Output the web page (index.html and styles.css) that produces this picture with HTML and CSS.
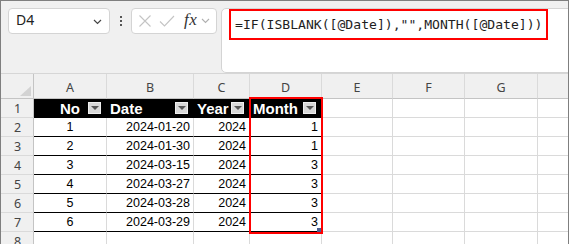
FILE: index.html
```html
<!DOCTYPE html>
<html>
<head>
<meta charset="utf-8">
<link rel="stylesheet" href="styles.css">
</head>
<body>
<div class="frame">
  <div class="fbar">
    <div class="namebox">
      <span class="nb-text">D4</span>
      <svg class="chev" width="9" height="6" viewBox="0 0 9 6"><path d="M1 1 L4.5 4.5 L8 1" fill="none" stroke="#444" stroke-width="1.2"/></svg>
    </div>
    <div class="dots"><i></i><i></i><i></i></div>
    <div class="fxbox">
      <svg class="ico" width="14" height="14" viewBox="0 0 14 14"><path d="M1.5 1.5 L12.5 12.5 M12.5 1.5 L1.5 12.5" stroke="#c4c4c4" stroke-width="1.1" fill="none"/></svg>
      <svg class="ico" width="16" height="12" viewBox="0 0 16 12"><path d="M1 6.5 L5.5 11 L15 1" stroke="#c4c4c4" stroke-width="1.1" fill="none"/></svg>
      <span class="fx">fx</span>
      <svg class="chev2" width="9" height="6" viewBox="0 0 9 6"><path d="M1 1 L4.5 4.5 L8 1" fill="none" stroke="#b0b0b0" stroke-width="1.1"/></svg>
    </div>
    <div class="finput">
      <span class="formula">=IF(ISBLANK([@Date]),"",MONTH([@Date]))</span>
    </div>
  </div>
  <div class="sheet">
    <div class="ch corner"><svg width="11" height="10" viewBox="0 0 11 10"><path d="M11 0 L11 10 L0 10 Z" fill="#d3d3d3"/></svg></div>
    <div class="ch">A</div><div class="ch">B</div><div class="ch">C</div><div class="ch">D</div><div class="ch">E</div><div class="ch">F</div><div class="ch">G</div><div class="ch last"></div>

    <div class="rh">1</div>
    <div class="c th center">No<span class="flt"></span></div>
    <div class="c th">Date<span class="flt"></span></div>
    <div class="c th">Year<span class="flt"></span></div>
    <div class="c th">Month<span class="flt"></span></div>
    <div class="c"></div><div class="c"></div><div class="c"></div><div class="c last"></div>

    <div class="rh">2</div>
    <div class="c td center">1</div><div class="c td">2024-01-20</div><div class="c td">2024</div><div class="c td">1</div>
    <div class="c"></div><div class="c"></div><div class="c"></div><div class="c last"></div>

    <div class="rh">3</div>
    <div class="c td center">2</div><div class="c td">2024-01-30</div><div class="c td">2024</div><div class="c td">1</div>
    <div class="c"></div><div class="c"></div><div class="c"></div><div class="c last"></div>

    <div class="rh">4</div>
    <div class="c td center">3</div><div class="c td">2024-03-15</div><div class="c td">2024</div><div class="c td">3</div>
    <div class="c"></div><div class="c"></div><div class="c"></div><div class="c last"></div>

    <div class="rh">5</div>
    <div class="c td center">4</div><div class="c td">2024-03-27</div><div class="c td">2024</div><div class="c td">3</div>
    <div class="c"></div><div class="c"></div><div class="c"></div><div class="c last"></div>

    <div class="rh">6</div>
    <div class="c td center">5</div><div class="c td">2024-03-28</div><div class="c td">2024</div><div class="c td">3</div>
    <div class="c"></div><div class="c"></div><div class="c"></div><div class="c last"></div>

    <div class="rh">7</div>
    <div class="c td center">6</div><div class="c td">2024-03-29</div><div class="c td">2024</div><div class="c td">3</div>
    <div class="c"></div><div class="c"></div><div class="c"></div><div class="c last"></div>

    <div class="rh">8</div>
    <div class="c"></div><div class="c"></div><div class="c"></div><div class="c"></div>
    <div class="c"></div><div class="c"></div><div class="c"></div><div class="c last"></div>

    <div class="sel"><span class="handle"></span></div>
  </div>
</div>
</body>
</html>
```
FILE: styles.css
```css
* { box-sizing: border-box; }
html, body { margin: 0; padding: 0; background: #fff; }
.frame {
  width: 569px;
  height: 244px;
  border-top: 1px solid #7f7f7f;
  border-left: 1px solid #7f7f7f;
  border-right: 1px solid #7f7f7f;
  overflow: hidden;
  font-family: "Liberation Sans", Arial, sans-serif;
}
.fbar {
  height: 73px;
  background: #f0f0f0;
  border-bottom: 1px solid #d6d6d6;
  padding: 7px 0 0 7px;
  display: flex;
  align-items: flex-start;
  overflow: hidden;
}
.namebox {
  width: 102px;
  height: 26px;
  background: #fff;
  border: 1px solid #d4d4d4;
  border-radius: 4px;
  display: flex;
  align-items: center;
  justify-content: space-between;
  padding: 0 7px 0 7px;
  font-family: "Noto Sans", "Open Sans", sans-serif;
  font-size: 14px;
  color: #222;
}
.nb-text { line-height: 1; margin-top: -3px; }
.chev { margin-top: 1px; }
.dots {
  width: 21px;
  height: 26px;
  display: flex;
  flex-direction: column;
  align-items: center;
  justify-content: center;
  gap: 2px;
}
.dots i { display: block; width: 2px; height: 2px; background: #555; }
.fxbox {
  width: 86px;
  height: 26px;
  background: #fff;
  border: 1px solid #d4d4d4;
  border-radius: 4px;
  display: flex;
  align-items: center;
  padding-left: 6px;
  gap: 7px;
}
.fx {
  font-family: "Liberation Serif", "DejaVu Serif", serif;
  font-style: italic;
  font-size: 17px;
  color: #333;
  margin-left: 2px;
  margin-top: -2px;
  letter-spacing: 0.5px;
}
.chev2 { margin-left: -3px; }
.finput {
  flex: 1;
  height: 65px;
  margin-left: 4px;
  margin-right: -12px;
  background: #fff;
  border: 1px solid #d4d4d4;
  border-radius: 5px;
  padding: 0 0 0 7px;
}
.formula {
  display: inline-block;
  border: 2px solid #ff0000;
  padding: 0 4px;
  height: 31px;
  line-height: 27px;
  font-family: "DejaVu Sans Mono", monospace;
  font-size: 13.1px;
  color: #1e1e1e;
  white-space: nowrap;
}

/* sheet */
.sheet {
  position: relative;
  display: grid;
  grid-template-columns: 33px 73px 87px 56px 72px 71px 72px 73px 1fr;
  grid-template-rows: 25px repeat(7, 19px) 19px;
}
.ch {
  background: #f0f0f0;
  border-right: 1px solid #dadada;
  border-bottom: 1px solid #c4c4c4;
  font-family: "Noto Sans", "Open Sans", sans-serif;
  font-size: 12.5px;
  color: #444;
  display: flex;
  align-items: center;
  justify-content: center;
  padding-top: 3px;
}
.ch.corner {
  border-right: 1px solid #c4c4c4;
  justify-content: flex-end;
  align-items: flex-end;
  padding: 0 2px 2px 0;
}
.ch.last, .c.last { border-right: none; }
.rh {
  background: #f0f0f0;
  border-right: 1px solid #c4c4c4;
  border-bottom: 1px solid #dadada;
  font-family: "Noto Sans", "Open Sans", sans-serif;
  font-size: 12.5px;
  color: #444;
  display: flex;
  align-items: center;
  justify-content: center;
  padding-left: 1px;
}
.c {
  border-right: 1px solid #dadada;
  border-bottom: 1px solid #dadada;
  position: relative;
}
.th {
  background: #000;
  color: #fff;
  font-weight: bold;
  font-size: 15px;
  border-right-color: #000;
  border-bottom-color: #000;
  display: flex;
  align-items: center;
  padding-left: 3px;
  line-height: 1;
}
.th.center { justify-content: center; padding-left: 0; }
.flt {
  position: absolute;
  right: 5px;
  top: 3px;
  width: 13px;
  height: 12px;
  background: #d8d8d8;
  border: 1px solid #efefef;
}
.flt::after {
  content: "";
  position: absolute;
  left: 2px;
  top: 3px;
  border-left: 4px solid transparent;
  border-right: 4px solid transparent;
  border-top: 4px solid #555;
}
.td {
  border-bottom-color: #000;
  font-size: 12.5px;
  color: #000;
  display: flex;
  align-items: center;
  justify-content: flex-end;
  padding-right: 3px;
  line-height: 1;
}
.td.center { justify-content: center; padding-right: 0; }
.sel {
  position: absolute;
  left: 248px;
  top: 23px;
  width: 74px;
  height: 137px;
  border: 2px solid #ff0000;
  pointer-events: none;
}
.handle {
  position: absolute;
  right: 0;
  bottom: 0;
  width: 4px;
  height: 4px;
  background: #4b5d8e;
}
```
